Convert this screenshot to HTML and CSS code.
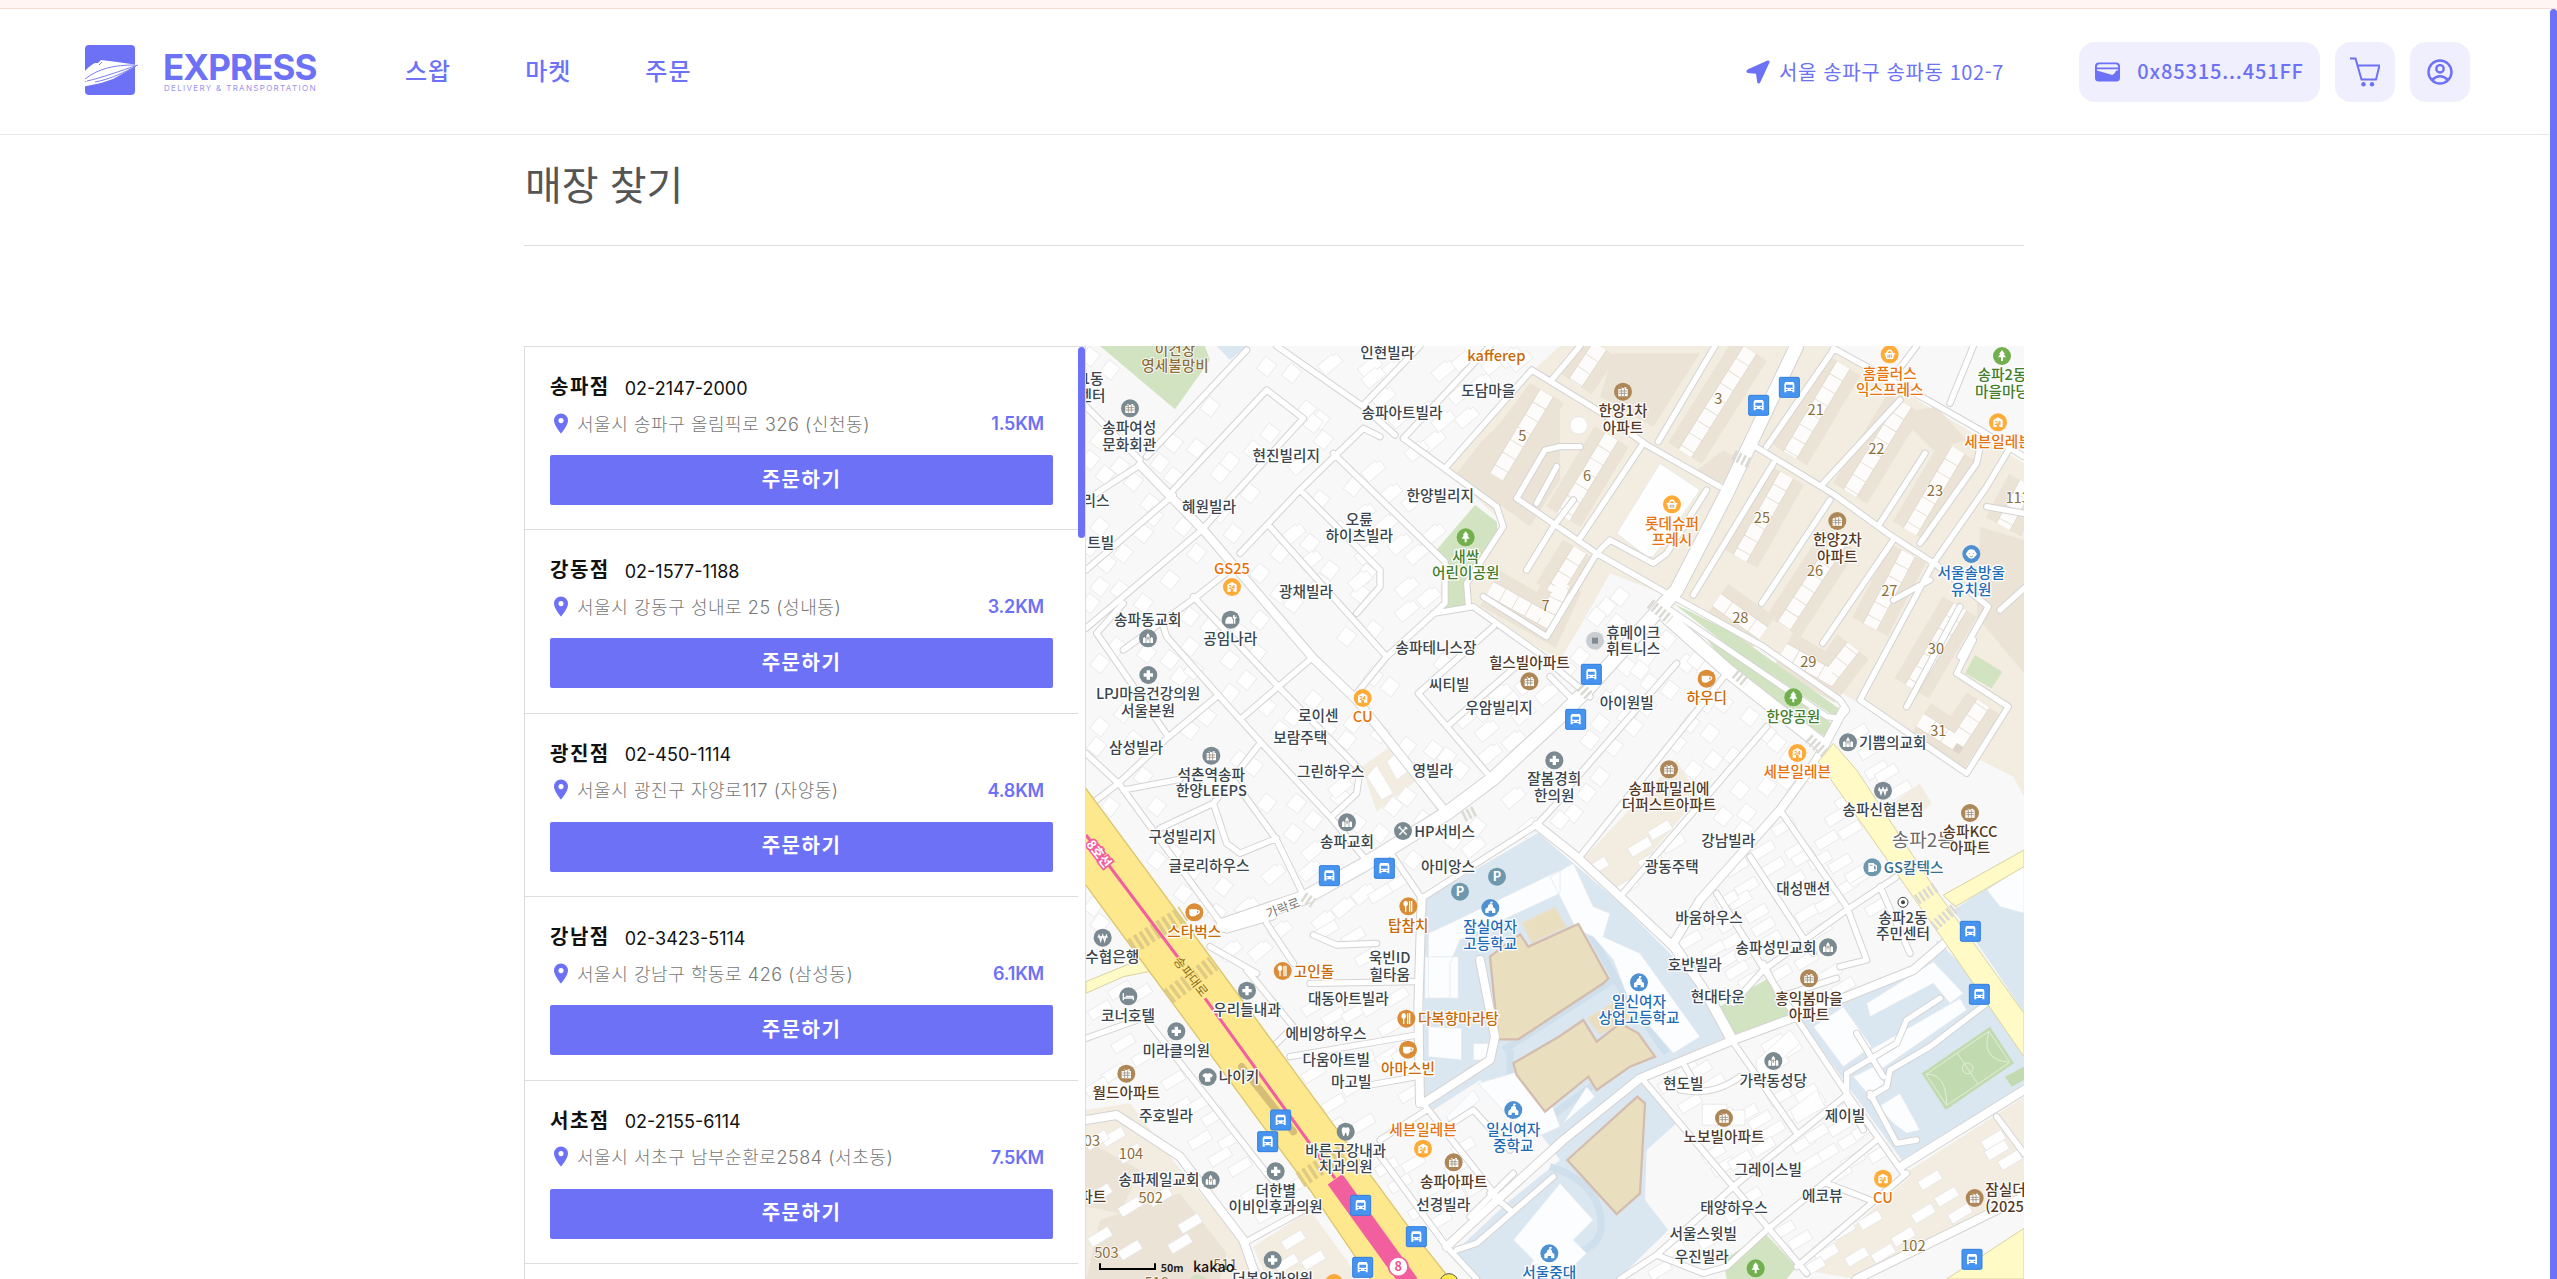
FILE: index.html
```html
<!DOCTYPE html>
<html lang="ko">
<head>
<meta charset="utf-8">
<title>매장 찾기 - EXPRESS</title>
<link rel="stylesheet" href="styles.css">
</head>
<body>
<div class="notice"></div>
<div class="viewport">
<div class="page">
<header class="header">
  <a class="logo">
    <svg class="logo-mark" viewBox="0 0 62 50"><rect x="8" width="50" height="50" rx="4"/><path class="boat" d="M4 33C4 29 13 20 18 18L21 18 24 15 40 17 61 20 36 34 24 38 0 43 10 36C6 37 4 36 4 33z"/><path class="trim" d="M10 36C24 33 43 26 61 20M8 34C22 23 38 20 58 20M25 17l-3 3M18 37C34 34 48 27 59 21"/></svg>
    <span class="logo-text"><b>EXPRESS</b><small>DELIVERY &amp; TRANSPORTATION</small></span>
  </a>
  <nav class="nav"><a>스왑</a><a>마켓</a><a>주문</a></nav>
  <div class="location"><svg viewBox="0 0 24 24"><path d="M21.500.600L2 9.200C0 10.200 0 12.700 2 13L10 13.700 11.200 22C11.600 24 13.500 24 14.300 22.300L23.500 2.500C24 1 23 0 21.500.600z"/></svg><span>서울 송파구 송파동 102-7</span></div>
  <div class="actions">
    <a class="wallet"><svg viewBox="0 0 26 20"><path fill-rule="evenodd" d="M4 0H22Q26 0 26 4V16Q26 20 22 20H4Q0 20 0 16V4Q0 0 4 0zM2 5.200H24V4Q23.500 2 21.500 2H4.500Q2.500 2 2 4zM2 7.200V8.500L18 13Q21 12 22 8.500H24V7.200z"/></svg><span>0x85315...451FF</span></a>
    <a class="square"><svg class="cart" viewBox="0 0 30 30"><path d="M0 1.500H5.500L11.500 22.500H26L29.500 8.500H7.500"/><circle cx="13.500" cy="27.300" r="2.200"/><circle cx="22" cy="27.300" r="2.200"/></svg></a>
    <a class="square"><svg class="user" viewBox="0 0 26 26"><circle cx="13" cy="13" r="11.500"/><circle cx="13" cy="9.800" r="3.700"/><path d="M5 21Q13 13.500 21 21"/></svg></a>
  </div>
</header>
<main class="content">
  <h1>매장 찾기</h1>
  <div class="finder">
    <div class="stores">
      <ul>
        <li><div class="name"><b>송파점</b><span>02-2147-2000</span></div><div class="addr"><svg viewBox="0 0 14 20"><path fill-rule="evenodd" d="M7 0a7 7 0 0 1 7 7c0 5-7 13-7 13S0 12 0 7a7 7 0 0 1 7-7zm0 4.500a2.600 2.600 0 1 0 .01 0z"/></svg><span>서울시 송파구 올림픽로 326 (신천동)</span><em>1.5KM</em></div><button>주문하기</button></li>
        <li><div class="name"><b>강동점</b><span>02-1577-1188</span></div><div class="addr"><svg viewBox="0 0 14 20"><path fill-rule="evenodd" d="M7 0a7 7 0 0 1 7 7c0 5-7 13-7 13S0 12 0 7a7 7 0 0 1 7-7zm0 4.500a2.600 2.600 0 1 0 .01 0z"/></svg><span>서울시 강동구 성내로 25 (성내동)</span><em>3.2KM</em></div><button>주문하기</button></li>
        <li><div class="name"><b>광진점</b><span>02-450-1114</span></div><div class="addr"><svg viewBox="0 0 14 20"><path fill-rule="evenodd" d="M7 0a7 7 0 0 1 7 7c0 5-7 13-7 13S0 12 0 7a7 7 0 0 1 7-7zm0 4.500a2.600 2.600 0 1 0 .01 0z"/></svg><span>서울시 광진구 자양로117 (자양동)</span><em>4.8KM</em></div><button>주문하기</button></li>
        <li><div class="name"><b>강남점</b><span>02-3423-5114</span></div><div class="addr"><svg viewBox="0 0 14 20"><path fill-rule="evenodd" d="M7 0a7 7 0 0 1 7 7c0 5-7 13-7 13S0 12 0 7a7 7 0 0 1 7-7zm0 4.500a2.600 2.600 0 1 0 .01 0z"/></svg><span>서울시 강남구 학동로 426 (삼성동)</span><em>6.1KM</em></div><button>주문하기</button></li>
        <li><div class="name"><b>서초점</b><span>02-2155-6114</span></div><div class="addr"><svg viewBox="0 0 14 20"><path fill-rule="evenodd" d="M7 0a7 7 0 0 1 7 7c0 5-7 13-7 13S0 12 0 7a7 7 0 0 1 7-7zm0 4.500a2.600 2.600 0 1 0 .01 0z"/></svg><span>서울시 서초구 남부순환로2584 (서초동)</span><em>7.5KM</em></div><button>주문하기</button></li>
      </ul>
      <div class="list-bar"></div>
    </div>
    <svg class="map" viewBox="18 18 2814 2799">
      <defs>
        <marker id="m1" markerUnits="userSpaceOnUse" markerWidth="80" markerHeight="80" refX="40" refY="40" orient="38"><path class="bld" d="M19 17H61V63H19z"/></marker>
        <marker id="m2" markerUnits="userSpaceOnUse" markerWidth="100" markerHeight="80" refX="50" refY="40" orient="-40"><path class="bld" d="M16 22H72V30H84V60H16z"/></marker>
        <marker id="m3" markerUnits="userSpaceOnUse" markerWidth="90" markerHeight="60" refX="45" refY="30" orient="-31"><path class="bld" d="M10 15H80V46H10z"/></marker>
        <g id="roads">
          <g class="lane">
            <path d="M590 18L850 200 945 285M970 295L1250 500 1270 560 1160 730 1165 790M970 295L1230 18M850 195L1020 18M1355 90L1095 385M1355 90L1560 215 1700 315 1920 440M2010 310L2260 462 2430 585 2570 675 2725 800 2640 950M2260 30L2060 320M2460 180L2230 430M2700 320L2690 370 2520 610M2810 290L2720 440 2560 670 2340 1080M2440 600L2228 910M2250 480L2045 790M2080 370L1840 765M1905 18L1735 305M1690 310L1500 595M1500 18L1415 120M1310 475L1395 330 1440 320 1500 320M1310 475L1550 640 1760 760M1550 640L1400 890M1560 630L1590 600 1720 670 1760 640 1880 450M1480 480L1420 560 1340 690M1210 770L1400 890 1470 770M1430 380L1370 490M1780 770L2050 920 2280 1080 2300 1110 2280 1135 2240 1130 1770 810M2260 25L2560 190 2700 270 2832 350M2510 18L2440 110M2680 18L2610 190M2535 340L2400 550M2440 780L2550 720M2640 800L2480 1100M2340 1080L2660 1300 2785 1100 2630 1000 2680 900M2860 720L2760 810M2832 520L2720 500"/>
            <path d="M500 30L200 350M18 200L180 360M280 450L560 150 670 235 365 570 18 865M18 690L280 465M18 480L180 375M850 265L660 450 480 640M850 265L900 290M760 340L1095 665 1095 790 920 950M660 450L900 690 900 740 830 820M570 560L920 950M1060 820L1180 800 1440 985M1240 860L1015 1060 1230 1310M450 690L350 770 130 930M130 790L50 880 265 1190M250 860L260 890 410 1060 545 1210 750 1430 850 1550M340 770L600 1045 840 1290 830 1360 755 1430M700 950L490 1130M410 1070L260 1195 115 1330 30 1395M18 1240L120 1335 430 1760M130 1350L300 1318M540 1210L400 1390 240 1465M460 1320L590 1500 670 1665M400 1390L440 1510 480 1540 590 1495M1100 1160L1330 960M920 950L830 1060M940 1550L1025 1675 1370 1455 1440 1380M560 1750L640 1870M440 1770L580 1730M390 1820L530 1900M500 1890L640 2060 580 2120M690 1930L1010 1925M630 2150L1010 2085M870 2235L1010 2210M200 2040L560 2500 620 2570M18 2095L200 2030M490 2710L690 2600M880 2420L1100 2720 1190 2817M1030 2290L1100 2380 1250 2570M900 2400L1040 2310M1100 2360L1180 2310 1290 2430M1170 2630L1300 2500M1230 2560L1290 2610M1130 2730L1190 2710 1420 2510M700 1785L770 1815 890 1810"/>
            <path d="M1940 1000L1500 1550M2060 1160L1620 1670M1790 970L1440 1370M1410 1010L1480 1080M1400 960L1530 1070M2100 1410L2300 1700 2360 1860 2280 1880M2010 1550L2200 1840M1910 1660L2060 1900 2140 2020 2300 2260 2470 2500M2450 1610L2300 1710 2050 1890 1960 1990M2400 1640L2490 1840M1685 2215L1960 2540 2180 2800M1955 2100L2150 2380M1960 2540L2300 2265M2390 2400L2060 2670 1940 2780 1870 2800 1730 2745M1960 2540L1730 2745 1620 2817M2480 2500L2150 2780M2240 2530L2370 2580M2750 2330L2832 2440M2330 2080L2410 2210M2350 2370L2300 2280 2300 2200 2450 2110 2480 2040 2580 1975M2370 2270L2420 2240 2430 2190 2550 2120 2720 1990M2370 2260L2450 2410 2510 2400M1810 2170L1850 2240M1800 2250Q1900 2270 1980 2210M2050 1870L2100 1970 2270 1915"/>
          </g>
          <g class="lane wide">
            <path d="M180 375L370 570 700 955 830 1080 1100 1420M1370 1455L1490 1550 1620 1670 1780 1820 1860 1930 1950 2095M1025 1675L1015 2000 1020 2290M1030 2290L1230 2160 1245 2090 1200 1860M2290 1110L2210 1260 2100 1410 1860 1680 1780 1810M18 2340L110 2325 300 2450 490 2700 530 2817M1100 2720L1230 2600 1450 2400 1680 2215 1960 2100 2150 2030 2500 1890 2640 1770M2470 2475L2832 2250M2330 2817L2832 2570M1780 1810L1900 1990 1960 2100"/>
          </g>
          <g class="lane avenue">
            <path d="M430 1755L680 1670 850 1575 1100 1420 1240 1315 1440 1130 1520 1050 1700 850 1790 750 1940 460 2150 18M1760 830L1940 990 2220 1210"/>
          </g>
        </g>
        <g id="slabs"><path d="M2010 30L1815 340M2290 75L2130 345M2475 190L2310 460M2635 330L2490 575M2120 405L1980 655M2280 600L2110 860M2485 640L2370 860M2640 800L2495 1045M1400 160L1250 410M1595 290L1450 530M1230 745L1400 840 1450 730M1500 630L1420 760M1560 18L1485 130M1910 780L2050 880M2110 930L2250 1010 2320 920M2520 1140L2630 1210 2710 1090M2840 430L2770 560"/></g>

        <g id="bldg"><path d="M-14-8H14V14H-14zM-10-13H-4V-8H4V-13H10V-8"/><path class="cut" d="M-12-2H12M-12 5H12M-5-8V13M4-8V13"/></g>
        <g id="plus"><path d="M-5-14H5V-5H14V5H5V14H-5V5H-14V-5H-5z"/></g>
        <g id="shop"><path d="M-14 14V-7L0-15 14-7V14H4V5H-4V14z"/></g>
        <g id="basket"><path d="M-16-4H16V0H14L10 14H-10L-14 0H-16z"/><path class="line" d="M-9-4Q0-22 9-4"/><path class="cut" d="M-5 1V10M0 1V10M5 1V10"/></g>
        <g id="tree"><path d="M0-18L9-6H5L12 4H3V15H-3V4H-12L-5-6H-9z"/></g>
        <g id="church"><path d="M-15 0L-11-4-7 0V14H-15zM-5-8L0-16 5-8V14H-5zM7 0L11-4 15 0V14H7z"/><path class="cut" d="M0-5V6M-4-1H4"/></g>
        <g id="cup"><path d="M-15-9H8V4Q6 12-4 12T-15 4z"/><path class="line" d="M8-5Q18-6 14 1 12 5 6 5"/></g>
        <g id="fork"><path d="M-15-9Q-14-17-8-17T-1-9Q-1-2-6 0V16H-10V0Q-15-2-15-9z"/><path class="line" d="M4-16V16M10-16V16"/></g>
        <g id="school"><path d="M-15 15V3L-7-3V-8L0-13V-19H7V-14H2L8-8V-3L15 3V15H5V8H-5V15z"/></g>
        <g id="won"><path class="line" d="M-12-10L-6 10 0-8 6 10 12-10M-15-2H15"/></g>
        <g id="tool"><path class="line" d="M-11-11L11 11M11-11L-11 11M-14-8L-8-14M5-12L13-5"/></g>
        <g id="dot"><path d="M-9-9H9V9H-9z"/></g>
        <g id="car"><path d="M-16 4Q-14-7-6-9H2L8 2V12H-16zM8-14H12V-8H16V-14L18-6 14-2V12H10V-2L6-6z"/></g>
        <g id="bed"><path class="line" d="M-15-10V12M-15 5H15V12M-8 0H14V5"/></g>
        <g id="shirt"><path d="M-6-12Q0-7 6-12L16-6 11 2 8 0V14H-8V0L-11 2-16-6z"/></g>
        <g id="tooth"><path d="M-12-6Q-11-14-4-13Q0-10 4-13 11-14 12-6 12 2 7 14 3 14 2 4H-2Q-3 14-7 14-12 2-12-6z"/></g>
        <g id="face"><path d="M-13-5Q-10-14 0-14T13-5L17 0 13 5Q8 14 0 14T-13 5L-17 0z"/><path class="cut" d="M-6-3V0M6-3V0M-5 6Q0 10 5 6"/></g>
        <g id="gas"><path d="M-12-13H5V14H-12z"/><path class="line" d="M5-8L12-4V8Q8 12 5 6"/><path class="cut" d="M-8-6H1"/></g>
        <g id="bus"><rect class="stop" x="-30" y="-30" width="60" height="60" rx="4"/><path fill-rule="evenodd" d="M-12-16H12L15-10V15H9V11H-9V15H-15V-10zM-10-8V1H10V-8zM-10 5V8H-5V5zM5 5V8H10V5z"/></g>
      </defs>

      <path fill="#f8f8f8" d="M18 18H2832V2817H18z"/>
      <g fill="#f3ede1">
        <path d="M1100 390L1355 95 1440 18H2240L2832 370V1370L2800 1310 2700 1260 2660 1310 2330 1085 1770 770 1590 700 1500 860 1440 960 1170 800 1160 730 1280 560z"/>
        <path d="M18 2310L150 2290 310 2500 480 2700 560 2817H18zM520 2720L690 2610 840 2817H560zM2490 2490L2740 2330 2832 2270V2560L2330 2817 2170 2790 2490 2510zM845 1280L925 1225 1005 1325 890 1415zM1505 1560L1790 1260 1855 1370 1615 1660zM2440 1390L2520 1330 2555 1390 2500 1440z"/>
      </g>
      <g fill="#ebe3d6"><path d="M1350 130L1440 180V420L1350 560 1130 400 1200 310 1260 250zM1600 40H1860L1720 260 1560 170zM1930 330L2010 380 1930 430 1840 400zM2450 220L2570 200 2660 300 2560 330zM2700 560L2832 600V1000L2690 830zM18 2400L180 2490 120 2620 18 2600zM60 2640L300 2560 440 2740 420 2817H18z"/></g>
      <use href="#slabs" class="yard"/>
      <path fill="#dbe7f0" d="M1030 1680L1375 1478 1410 1510 1620 1690 1780 1850 1840 1920 1940 2090 1680 2205 1790 2350 1700 2430 1695 2580 1765 2670 1615 2817H1180L1120 2740 1280 2590 1440 2460 1380 2380 1200 2220 1060 2310 1030 2270zM2160 2040L2260 1990 2560 1860 2570 1800 2640 1870 2832 2150V2235L2465 2460zM2620 1710L2832 1570V2020L2740 1880zM410 18H500L450 60z"/>
      <path fill="none" stroke="#cfe0ec" stroke-width="22" d="M1425 1610L1520 1760 1620 1940 1760 2140M1600 1920L1270 2130M1290 2130L1290 2200 1400 2340 1560 2220M1410 2480Q1540 2520 1560 2620T1480 2740"/>
      <g fill="#fcfdfe" stroke="#dfe6eb" stroke-width="2"><path d="M1110 1750L1440 1590V1660L1140 1800 1110 1870V1975H1045V1780zM1410 1610L1480 1570 1540 1700 1590 1720 1570 1790 1680 1840 1860 2090 1780 2140 1650 1990 1600 1860 1540 1790 1490 1770zM1035 1850H1135V1975H1035zM1045 2060L1145 2065V2160L1045 2150zM1180 2110H1225V2160H1180zM1330 2190L1410 2280 1440 2360 1350 2400 1195 2230zM1100 2330L1180 2250 1200 2280 1110 2350zM1440 2530L1540 2640 1480 2700 1520 2740 1440 2817H1330L1360 2760 1300 2700zM1430 2380L1520 2240 1545 2270 1450 2350zM2360 1990L2560 1865 2650 1960 2610 1990 2560 1930 2370 2030zM2200 2060L2290 2000 2375 2120 2290 2180zM2370 2130L2640 1975 2660 2010 2400 2190zM2320 2210L2380 2180 2415 2230 2370 2270zM2395 2300L2460 2260 2520 2370 2480 2380 2440 2350zM2720 1650L2832 1575V1720L2760 1700z"/></g>
      <g fill="#d1e3c0"><path d="M60 18H375L390 60 285 208zM1185 495L1250 545 1255 590 1160 720 1165 800 1090 812 1105 690 1065 635zM1780 790L1960 880 2283 1110 2265 1130 1960 930zM1860 870L1990 950 2255 1150 2235 1190 1950 990zM2685 945L2767 995 2735 1045 2655 1000zM1910 2005L2065 1915 2145 2035 1960 2090zM1930 2760L2055 2680 2150 2780 2120 2817H1940zM330 2817Q350 2790 380 2817z"/></g>
      <g fill="#e9dfbf" stroke="#d4bdae" stroke-width="7"><path d="M1230 1850L1320 1783 1345 1820 1495 1752 1585 1915 1570 1930 1440 2015 1315 2098H1255zM1440 2088L1300 2170 1310 2205 1395 2315 1525 2210 1550 2250 1650 2180 1725 2150 1675 2080 1620 2050 1550 2105 1510 2040zM1672 2270L1695 2290 1680 2560 1610 2622 1462 2460z"/><path stroke="#eadfc4" d="M1330 1750L1425 1705 1455 1760 1355 1805zM1525 2035L1620 1980 1650 2030 1560 2080z"/></g>
      <g fill="#c2dab0"><path d="M2525 2200L2730 2060 2802 2170 2597 2310zM2775 2210L2832 2180V2220L2795 2240z"/><g fill="none" stroke="#e2eed8" stroke-width="3"><path d="M2538 2203L2727 2074 2789 2167 2600 2296zM2632 2139L2694 2232M2538 2203Q2600 2200 2600 2296M2727 2074Q2700 2160 2789 2167"/><circle cx="2663" cy="2185" r="16"/></g></g>

      <path class="m1" d="M30 50L90 90 60 300 110 300 120 380 75 405 30 360 160 425 210 490 60 560 190 580 130 640 80 670 30 620 220 530 60 740 120 750 190 790 30 790 280 310 350 325 280 410 240 370 420 400 450 365 390 200 560 80 635 100 570 280 520 330 680 210 730 300 720 240 310 560 420 520 510 460 460 580 600 640 540 700 350 640 270 720 600 340 820 440 720 480 780 570 690 610 750 690 860 700 840 760 800 890 880 870 720 730 640 790 540 840 600 760 480 880 330 830 390 860 700 250"/>
      <path class="m2" d="M660 370L750 70 870 80 930 90 960 230 910 170 880 110 1040 210 1090 90 1150 60 1240 70 1140 160 1200 130 1060 300 1010 330 1090 240 880 390 930 460 1000 480 850 520 920 550 960 610 1060 580 1010 640 640 580 690 660 860 640 840 720 980 740 1045 770 980 810 1290 50 1160 230 1320 60"/>
      <path class="m1" d="M60 970L110 920 200 940 270 960 330 920 300 1010 340 990 240 1060 190 1090 130 1120 60 1160 50 1220 160 1200 190 1310 380 1130 330 1170 450 1060 500 1020 450 960 530 940 560 1100 640 1130 700 1080 600 1170 480 1260 520 1280 560 1390 650 1390 700 1440 640 1480 780 1370 740 1170 800 1200 820 1150 660 1200 90 1400 230 1400 280 1540 340 1590 230 1560 310 1660 280 1470 430 1640 370 1700 410 1720 60 1750 40 1700 880 1010 930 1040 900 1180 980 1220 1060 1230 1100 1250 1140 1290 940 1400 830 1450 900 1480 980 1370 1030 1440 1000 1560 1120 1500 1190 1460 1090 970"/>
      <path class="m2" d="M780 1340L1160 1130 1220 1110 1280 1080 1330 1120 1220 1170 1260 1060 1230 1240 1300 1200 1340 1030 1400 1060 1300 1370 1390 1310 1350 1460 580 1600 700 1530 500 1700 790 1700 850 1660 730 1740 600 1770 450 1830 540 1830 690 1590 1180 1520"/>
      <path class="m3" d="M950 1630L900 1660 820 1790 860 1850 740 1770 120 1950 60 2010 180 1960 100 2200 50 2240 190 2150 130 2110 250 2130 280 2220 300 2300 360 2290 400 2330 360 2400 450 2400 420 2450 480 2480 520 2560 560 2620 640 2540 700 2000 760 2030 820 2020 880 2000 950 1970 850 2160 920 2150 970 2140 700 2200 760 2290 820 2240 930 2060 990 2260 760 2360 850 2350 920 2480 960 2530 1000 2470 1050 2550 1020 2610 1080 2640 1130 2480 1190 2540 1120 2570 1150 2420 100 2390 50 2400 150 2440 60 2560 150 2600 240 2570 60 2690 150 2730 330 2650 300 2710 640 2700 620 2770 700 2760"/>
      <path class="m1" d="M1620 770L1580 800 1550 830 1610 850 1740 910 1700 950 1760 900 1820 970 1550 900 1500 950 1460 990 1640 980 1680 990 1620 1060 1580 1080 1710 1030 1700 1100 1640 1130 1560 1150 1530 1200 1600 1220 1660 1160 1770 1050 1850 960 1880 990 1880 1090 1930 1090 2010 1130 1830 1150 1790 1210 1890 1180 1900 1260 1960 1250 1840 1290 2090 1210 2060 1180 2130 1250 1980 1350 2060 1340 2120 1320 2190 1300 2000 1420 1930 1430 1990 1470 1560 1310 1520 1360 1480 1420 1470 1320 1440 1440"/>
      <path class="m3" d="M2330 1180L2370 1230 2390 1290 2460 1350 2420 1300 2300 1380 2270 1430 2310 1470 2240 1500 2220 1560 2280 1570 2110 1460 2150 1530 2170 1550 2050 1530 2080 1580 2140 1620 1970 1580 2000 1640 1980 1680 2030 1720 2050 1760 2070 1800 2110 1830 1940 1680 1900 1740 1950 1750 1960 1800 1900 1830 1940 1860 2000 1840 1830 1800 1870 1880 2180 1720 2240 1690 2220 1770 2300 1640 2340 1610 2330 1600 1970 1890 2010 1920 2100 1900 2250 1900 2290 1940 2180 1860 2190 2000 2080 2110 2130 2130 2090 2170 2180 2260 2200 2290 2140 2320 2100 2270 2080 2370 2040 2340 1820 2190 1860 2190 1900 2230 1770 2230 1830 2290 1930 2330 2000 2320 2050 2420 1900 2440 1930 2480 1980 2460 2170 2410 2210 2380 2240 2440 2280 2360 2310 2400 2350 2370 2190 2470 2290 2310 2320 2460 2400 2440 2280 2500 2010 2570 1970 2620 2110 2670 2160 2700 1780 2730 1740 2790 1890 2700 2290 2670 2370 2640 2240 2740 2200 2780 2330 2750 2740 2400 2790 2460 2750 2430 2550 2520 2600 2570 2530 2620 2470 2690 2410 2740 2640 2620 1740 1470 1680 1520 1710 1560 1780 1510 1640 1640 1550 1580 2390 1700"/>
      <path class="bld" d="M1610 580L1740 370 1860 450 1720 650 1700 650zM920 1265L952 1235 990 1290 950 1320zM860 1310L905 1380 940 1360 890 1275zM1867 2293H1940V2310H1995V2355H1867zM2030 2160L2130 2070 2160 2110 2090 2170 2070 2250 2030 2200zM2130 2310L2210 2250 2235 2300 2150 2350z"/>

      <use href="#slabs" class="slab-edge"/><use href="#slabs" class="slab"/>
      <circle class="bld" cx="1496" cy="256" r="26"/>
      <use href="#roads" class="casing"/><use href="#roads" class="street"/>

      <g fill="#fffac6" stroke="#d9d2a4" stroke-width="3"><path d="M2832 2665L2600 2817H2832zM18 1925L200 1850 230 1890 130 1910 18 1960zM2590 1665L2832 1530V1580L2625 1700zM2260 1210L2330 1290 2560 1640 2832 2020V2150L2590 1800 2215 1265z"/></g>
      <path fill="#fee88d" stroke="#dcc66e" stroke-width="4" d="M10 1335L420 1890 985 2660 1120 2830H880L690 2550 205 1890 10 1625z"/>
      <path class="zebra" d="M155 1820L310 1720M265 1970L400 1870M660 2520L800 2430"/>
      <path class="zebra gray" d="M1960 345L2010 370M1710 790L1770 840M2185 1195L2235 1240M670 1670L700 1690M1965 1000L2000 1030M1500 1040L1530 1070M2510 1680L2570 1640M2560 1760L2630 1700M1150 1430L1190 1410"/>
      <path stroke="#d6bd78" stroke-width="22" stroke-linecap="round" fill="none" d="M485 2180L640 2375"/>
      <path stroke="#f25f9f" stroke-width="9" fill="none" d="M18 1485L300 1860M375 1975L765 2515"/>
      <path stroke="#f25f9f" stroke-width="54" fill="none" d="M765 2518L990 2830"/>
      <circle cx="955" cy="2780" r="29" fill="#fff" stroke="#f25f9f" stroke-width="5"/>
      <circle cx="1107" cy="2829" r="28" fill="#fde94d" stroke="#555" stroke-width="3"/>
      <circle cx="762" cy="2829" r="27" fill="#f9a83a"/>

      <g class="gray"><g transform="translate(150 205)"><circle r="27"/><use href="#bldg"/></g><g transform="translate(452 839)"><circle r="27"/><use href="#car"/></g><g transform="translate(204 895)"><circle r="27"/><use href="#church"/></g><g transform="translate(205 1005)"><circle r="27"/><use href="#plus"/></g><g transform="translate(394 1247)"><circle r="27"/><use href="#bldg"/></g><g transform="translate(801 1447)"><circle r="27"/><use href="#church"/></g><g transform="translate(969 1473)"><circle r="27"/><use href="#tool"/></g><g transform="translate(1423 1261)"><circle r="27"/><use href="#plus"/></g><g transform="translate(68 1793)"><circle r="27"/><use href="#won"/></g><g transform="translate(2304 1207)"><circle r="27"/><use href="#church"/></g><g transform="translate(2409 1352)"><circle r="27"/><use href="#won"/></g><g transform="translate(2244 1822)"><circle r="27"/><use href="#church"/></g><g transform="translate(145 1969)"><circle r="27"/><use href="#bed"/></g><g transform="translate(501 1952)"><circle r="27"/><use href="#plus"/></g><g transform="translate(289 2074)"><circle r="27"/><use href="#plus"/></g><g transform="translate(383 2211)"><circle r="27"/><use href="#shirt"/></g><g transform="translate(797 2375)"><circle r="27"/><use href="#tooth"/></g><g transform="translate(587 2494)"><circle r="27"/><use href="#plus"/></g><g transform="translate(392 2520)"><circle r="27"/><use href="#church"/></g><g transform="translate(578 2760)"><circle r="27"/><use href="#plus"/></g><g transform="translate(2080 2163)"><circle r="27"/><use href="#church"/></g></g>
      <g class="brown"><g transform="translate(1629 155)"><circle r="27"/><use href="#bldg"/></g><g transform="translate(2272 543)"><circle r="27"/><use href="#bldg"/></g><g transform="translate(1348 1024)"><circle r="27"/><use href="#bldg"/></g><g transform="translate(1767 1288)"><circle r="27"/><use href="#bldg"/></g><g transform="translate(2670 1419)"><circle r="27"/><use href="#bldg"/></g><g transform="translate(139 2201)"><circle r="27"/><use href="#bldg"/></g><g transform="translate(1121 2467)"><circle r="27"/><use href="#bldg"/></g><g transform="translate(2187 1915)"><circle r="27"/><use href="#bldg"/></g><g transform="translate(1932 2334)"><circle r="27"/><use href="#bldg"/></g><g transform="translate(2684 2574)"><circle r="27"/><use href="#bldg"/></g></g>
      <g class="amber"><g transform="translate(456 741)"><circle r="27"/><use href="#shop"/></g><g transform="translate(2429 43)"><circle r="27"/><use href="#basket"/></g><g transform="translate(1776 493)"><circle r="27"/><use href="#basket"/></g><g transform="translate(2754 247)"><circle r="27"/><use href="#shop"/></g><g transform="translate(848 1074)"><circle r="27"/><use href="#shop"/></g><g transform="translate(2152 1239)"><circle r="27"/><use href="#shop"/></g><g transform="translate(1029 2426)"><circle r="27"/><use href="#shop"/></g><g transform="translate(2409 2516)"><circle r="27"/><use href="#shop"/></g></g>
      <g class="h24"><text x="456" y="748">24</text><text x="2754" y="254">24</text><text x="848" y="1081">24</text><text x="2152" y="1246">24</text><text x="1029" y="2433">24</text><text x="2409" y="2523">24</text></g>
      <g class="food"><g transform="translate(343 1717)"><circle r="27"/><use href="#cup"/></g><g transform="translate(1880 1016)"><circle r="27"/><use href="#cup"/></g><g transform="translate(985 1699)"><circle r="27"/><use href="#fork"/></g><g transform="translate(608 1893)"><circle r="27"/><use href="#fork"/></g><g transform="translate(979 2036)"><circle r="27"/><use href="#fork"/></g><g transform="translate(984 2129)"><circle r="27"/><use href="#cup"/></g></g>
      <g class="green"><g transform="translate(1157 592)"><circle r="27"/><use href="#tree"/></g><g transform="translate(2766 48)"><circle r="27"/><use href="#tree"/></g><g transform="translate(2140 1072)"><circle r="27"/><use href="#tree"/></g><g transform="translate(2027 2785)"><circle r="27"/><use href="#tree"/></g></g>
      <g class="blue"><g transform="translate(2674 642)"><circle r="27"/><use href="#face"/></g><g transform="translate(1231 1704)"><circle r="27"/><use href="#school"/></g><g transform="translate(1677 1927)"><circle r="27"/><use href="#school"/></g><g transform="translate(1300 2310)"><circle r="27"/><use href="#school"/></g><g transform="translate(1408 2740)"><circle r="27"/><use href="#school"/></g></g>
      <g class="teal"><g transform="translate(1251 1610)"><circle r="27"/></g><g transform="translate(1140 1655)"><circle r="27"/></g><g transform="translate(2377 1582)"><circle r="27"/><use href="#gas"/></g></g>
      <g class="park"><text x="1251" y="1624">P</text><text x="1140" y="1669">P</text></g>
      <g class="muted"><g transform="translate(1545 902)"><circle r="27"/><use href="#dot"/></g></g>
      <circle cx="2469" cy="1687" r="15" fill="#fff" stroke="#444" stroke-width="3"/><circle cx="2469" cy="1687" r="6" fill="#444"/>
      <g fill="#fff"><use href="#bus" x="2128" y="142"/><use href="#bus" x="2036" y="196"/><use href="#bus" x="1534" y="1003"/><use href="#bus" x="1487" y="1138"/><use href="#bus" x="748" y="1607"/><use href="#bus" x="913" y="1585"/><use href="#bus" x="2671" y="1774"/><use href="#bus" x="2698" y="1963"/><use href="#bus" x="2676" y="2758"/><use href="#bus" x="602" y="2340"/><use href="#bus" x="563" y="2405"/><use href="#bus" x="842" y="2596"/><use href="#bus" x="1009" y="2690"/><use href="#bus" x="848" y="2782"/></g>

      <g class="labels" transform="translate(0 16)">
        <text class="dong" x="2530" y="1505">송파2동</text>
        <text x="922" y="38">인현빌라</text><text x="1225" y="153">도담마을</text><text x="966" y="219">송파아트빌라</text><text x="148" y="264">송파여성</text><text x="148" y="313">문화회관</text><text x="38" y="117">1동</text><text x="36" y="166">센터</text><text x="619" y="348">현진빌리지</text><text x="387" y="501">혜원빌라</text><text x="48" y="482">리스</text><text x="62" y="608">트빌</text><text x="1081" y="466">한양빌리지</text><text x="838" y="538">오륜</text><text x="838" y="587">하이츠빌라</text><text x="678" y="756">광채빌라</text><text x="203" y="838">송파동교회</text><text x="451" y="897">공임나라</text><text x="1068" y="923">송파테니스장</text><text x="1660" y="877">휴메이크</text><text x="1660" y="926">휘트니스</text>
        <text x="204" y="1062">LPJ마음건강의원</text><text x="204" y="1113">서울본원</text><text x="168" y="1223">삼성빌라</text><text x="394" y="1303">석촌역송파</text><text x="394" y="1353">한양LEEPS</text><text x="715" y="1126">로이센</text><text x="661" y="1194">보람주택</text><text x="752" y="1295">그린하우스</text><text x="1058" y="1291">영빌라</text><text x="1108" y="1035">씨티빌</text><text x="1257" y="1104">우암빌리지</text><text x="307" y="1491">구성빌리지</text><text x="387" y="1576">글로리하우스</text><text x="801" y="1505">송파교회</text><text x="1094" y="1474">HP서비스</text><text x="1104" y="1580">아미앙스</text><text x="97" y="1850">수협은행</text><text x="1423" y="1317">잘봄경희</text><text x="1423" y="1367">한의원</text><text x="929" y="1854">욱빈ID</text><text x="929" y="1904">힐타움</text>
        <text x="1640" y="1088">아이원빌</text><text x="2438" y="1207">기쁨의교회</text><text x="2409" y="1409">송파신협본점</text><text x="1945" y="1503">강남빌라</text><text x="1775" y="1581">광동주택</text><text x="2170" y="1645">대성맨션</text><text x="1887" y="1733">바움하우스</text><text x="2088" y="1822">송파성민교회</text><text x="2469" y="1733">송파2동</text><text x="2469" y="1782">주민센터</text><text x="1844" y="1875">호반빌라</text>
        <text x="805" y="1976">대동아트빌라</text><text x="501" y="2008">우리들내과</text><text x="144" y="2027">코너호텔</text><text x="738" y="2081">에비앙하우스</text><text x="289" y="2131">미라클의원</text><text x="769" y="2160">다움아트빌</text><text x="814" y="2226">마고빌</text><text x="477" y="2211">나이키</text><text x="258" y="2327">주호빌라</text><text x="797" y="2432">바른구강내과</text><text x="797" y="2481">치과의원</text><text x="237" y="2520">송파제일교회</text><text x="587" y="2551">더한별</text><text x="587" y="2600">이비인후과의원</text><text x="1090" y="2595">선경빌라</text><text x="578" y="2817">더봄안과의원</text>
        <text x="1913" y="1971">현대타운</text><text x="2080" y="2221">가락동성당</text><text x="1810" y="2231">현도빌</text><text x="2295" y="2328">제이빌</text><text x="2065" y="2490">그레이스빌</text><text x="2227" y="2568">에코뷰</text><text x="1962" y="2604">태양하우스</text><text x="1870" y="2682">서울스윗빌</text><text x="1865" y="2750">우진빌라</text>
        <g class="t-apt"><text x="1629" y="213">한양1차</text><text x="1629" y="262">아파트</text><text x="2272" y="600">한양2차</text><text x="2272" y="650">아파트</text><text x="1348" y="968">힐스빌아파트</text><text x="1767" y="1346">송파파밀리에</text><text x="1767" y="1395">더퍼스트아파트</text><text x="2670" y="1475">송파KCC</text><text x="2670" y="1524">아파트</text><text x="139" y="2257">월드아파트</text><text x="1121" y="2524">송파아파트</text><text x="2187" y="1975">홍익봄마을</text><text x="2187" y="2023">아파트</text><text x="1932" y="2390">노보빌아파트</text><text x="38" y="2569">파트</text><text class="start" x="2716" y="2550">잠실더</text><text class="start" x="2716" y="2601">(2025</text></g>
        <g class="t-num"><text x="1327" y="287">5</text><text x="1397" y="797">7</text><text x="1915" y="176">3</text><text x="1521" y="407">6</text><text x="2207" y="209">21</text><text x="2389" y="325">22</text><text x="2565" y="453">23</text><text x="2813" y="474">113</text><text x="2046" y="532">25</text><text x="2205" y="692">26</text><text x="2428" y="753">27</text><text x="1981" y="832">28</text><text x="2185" y="965">29</text><text x="2568" y="927">30</text><text x="2575" y="1171">31</text><text x="2500" y="2718">102</text><text x="36" y="2402">03</text><text x="153" y="2440">104</text><text x="212" y="2574">502</text><text x="79" y="2737">503</text><text x="436" y="2775">511</text><text x="230" y="2828">510</text><text class="heavy" x="285" y="30">이건창</text><text class="heavy" x="285" y="78">영세불망비</text></g>
        <g class="t-shop"><text x="456" y="685">GS25</text><text x="1776" y="551">롯데슈퍼</text><text x="1776" y="600">프레시</text><text x="2429" y="101">홈플러스</text><text x="2429" y="150">익스프레스</text><text x="2754" y="306">세븐일레븐</text><text x="848" y="1131">CU</text><text x="2152" y="1296">세븐일레븐</text><text x="1029" y="2370">세븐일레븐</text><text x="2409" y="2573">CU</text></g>
        <g class="t-food"><text x="1249" y="47">kafferep</text><text x="343" y="1774">스타벅스</text><text x="1880" y="1073">하우디</text><text x="985" y="1756">탑참치</text><text x="702" y="1894">고인돌</text><text x="1135" y="2036">다복향마라탕</text><text x="984" y="2187">아마스빈</text></g>
        <g class="t-green"><text x="1157" y="650">새싹</text><text x="1157" y="699">어린이공원</text><text x="2766" y="105">송파2동</text><text x="2766" y="155">마을마당</text><text x="2140" y="1130">한양공원</text></g>
        <g class="t-blue"><text x="2674" y="699">서울솔방울</text><text x="2674" y="748">유치원</text><text x="1231" y="1761">잠실여자</text><text x="1231" y="1811">고등학교</text><text x="1677" y="1985">일신여자</text><text x="1677" y="2034">상업고등학교</text><text x="1300" y="2368">일신여자</text><text x="1300" y="2417">중학교</text><text x="1408" y="2798">서울중대</text></g>
        <g class="t-teal"><text x="2501" y="1582">GS칼텍스</text></g>
      </g>
      <text class="road-name" transform="translate(614 1717) rotate(-21)">가락로</text>
      <text class="road-name main" transform="translate(322 1918) rotate(52)">송파대로</text>
      <text class="line-name" transform="translate(46 1550) rotate(52)">8호선</text>
      <text class="line-num" x="955" y="2794">8</text>
      <path fill="none" stroke="#000" stroke-width="6" d="M60 2770V2787H225V2770"/>
      <text class="scale" x="242" y="2796">50m</text>
      <text class="kakao" x="339" y="2795">kakao</text>
    </svg>
  </div>
</main>
</div>
<div class="page-bar"></div>
</div>
</body>
</html>
```

FILE: styles.css
```css
* { box-sizing: border-box; }
body { margin: 0; height: 1279px; overflow: hidden; background: #fff; font-family: "Noto Sans CJK KR", sans-serif; color: #111; }
.notice { height: 9px; background: #fff6f3; border-bottom: 1px solid #f5dcd2; }
.viewport { display: flex; height: 1270px; overflow: hidden; }
.page { width: 2550px; flex: none; }
.page-bar { width: 7px; height: 1400px; background: #6d71f6; border-radius: 4px 4px 0 0; }

.header { display: flex; align-items: center; height: 126px; padding: 0 80px 0 77px; border-bottom: 1px solid #e8e8e8; color: #6d71f6; }
.logo { display: flex; width: 328px; margin-top: -4px; }
.logo-mark { width: 62px; height: 50px; fill: #6d71f6; margin-right: 24px; flex: none; }
.logo-mark .boat { fill: #fff; }
.logo-mark .trim { fill: none; stroke: #6d71f6; stroke-width: .9; }
.logo-text { display: flex; flex-direction: column; font-family: Inter, sans-serif; }
.logo-text b { font-size: 35px; line-height: 43px; font-weight: 700; letter-spacing: -.9px; margin-top: 1px; }
.logo-text small { font-size: 8px; line-height: 8px; letter-spacing: 1.320px; color: #9a92ec; margin: -5px 0 0 1px; white-space: nowrap; }
.nav { display: flex; gap: 74px; font-size: 24px; font-weight: 500; letter-spacing: 1px; line-height: 36px; margin-top: -3px; }
.location { display: flex; align-items: center; margin-left: auto; gap: 9px; font-size: 20px; letter-spacing: .6px; line-height: 30px; }
.location svg { width: 24px; height: 24px; fill: #6d71f6; }
.actions { display: flex; gap: 15px; margin-left: 75px; }
.actions a { height: 60px; border-radius: 16px; background: #f0effe; display: flex; align-items: center; justify-content: center; }
.actions .wallet { width: 241px; gap: 17px; font-size: 20px; font-weight: 500; letter-spacing: .85px; }
.wallet svg { width: 25px; height: 20px; fill: #6d71f6; }
.wallet span { line-height: 30px; margin-top: -2px; }
.square { width: 60px; }
.cart { width: 30px; height: 30px; fill: #6d71f6; }
.cart path { fill: none; stroke: #6d71f6; stroke-width: 2; }
.user { width: 26px; height: 26px; fill: none; stroke: #6d71f6; stroke-width: 2.400; }

.content { width: 1500px; margin: 0 0 0 524px; }
h1 { margin: 0; height: 111px; padding: 18px 0 0 1px; font-size: 40px; line-height: 60px; font-weight: 400; color: #555; border-bottom: 1px solid #ddd; }
.finder { display: flex; margin-top: 100px; height: 933px; }
.stores { display: flex; width: 562px; flex: none; border: 1px solid #ddd; border-bottom: 0; overflow: hidden; }
.stores ul { flex: 1; margin: 0; padding: 0; list-style: none; }
.stores li { height: 183.400px; padding: 24.500px 25px 0; border-bottom: 1px solid #ddd; }
.list-bar { width: 7px; height: 191px; border-radius: 4px; background: #6d71f6; }
.name { display: flex; align-items: center; height: 30px; gap: 15px; }
.name b { font-size: 20px; font-weight: 700; letter-spacing: 1.500px; margin-top: -2px; }
.name span { font: 18px/22px Inter, sans-serif; margin-top: 4px; }
.addr { display: flex; align-items: center; height: 30px; margin-top: 7.500px; padding: 0 9px 0 4px; font: 300 18px/27px Inter, "Noto Sans CJK KR", sans-serif; letter-spacing: .55px; color: #777; }
.addr svg { width: 14px; height: 21px; fill: #6d71f6; margin: -2px 9px 0 0; }
.addr em { margin-left: auto; font: 600 18px/22px Inter, sans-serif; color: #6d71f6; letter-spacing: -.2px; }
.stores button { display: block; width: 503px; height: 50px; margin-top: 16px; padding: 0 0 3px; border: 0; border-radius: 2px; background: #6d71f6; color: #fff; font: 700 20px/30px "Noto Sans CJK KR", sans-serif; letter-spacing: 1.500px; }

.map { width: 938px; height: 933px; flex: none; display: block; overflow: hidden; }
.bld { fill: #fefefe; stroke: #e2e2e2; stroke-width: 2; }
.m1, .m2, .m3 { fill: none; }
.m1 { marker: url(#m1); }
.m2 { marker: url(#m2); }
.m3 { marker: url(#m3); }
.street { --edge: 0px; fill: none; stroke: #fff; stroke-linejoin: round; stroke-linecap: round; }
.casing { --edge: 6px; fill: none; stroke: #d3d3d3; stroke-linejoin: round; stroke-linecap: round; }
.lane { stroke-width: calc(16px + var(--edge)); }
.lane.wide { stroke-width: calc(24px + var(--edge)); }
.lane.avenue { stroke-width: calc(40px + var(--edge)); }
.yard { fill: none; stroke: #ebe3d6; stroke-width: 120; }
.slab-edge { fill: none; stroke: #ddd5c9; stroke-width: 48; }
.slab { fill: none; stroke: #fdfcfb; stroke-width: 44; stroke-dasharray: 42 2; }
.zebra { fill: none; stroke: #dfcb85; stroke-width: 50; stroke-dasharray: 11 9; }
.zebra.gray { stroke: #dcdad4; stroke-width: 32; stroke-dasharray: 8 7; }
.line { fill: none; stroke: #fff; stroke-width: 4; }
.cut { fill: none; stroke: #9a9080; stroke-width: 2.500; }
.stop { fill: #4793f0; stroke: #327fdc; stroke-width: 3; }
.gray circle { fill: #7b8990; }
.brown circle { fill: #ad8757; }
.amber circle { fill: #ffab38; }
.food circle { fill: #da8c36; }
.green circle { fill: #72b04f; }
.blue circle { fill: #4e90d0; }
.teal circle { fill: #6d98ad; }
.muted circle { fill: #cacdd1; }
.muted use { fill: #808b93; }
.gray use, .brown use, .amber use, .food use, .green use, .blue use, .teal use { fill: #fff; }
.h24 text { font: 700 15px Inter, sans-serif; text-anchor: middle; fill: #f09a20; }
.park text { font: 700 38px "Noto Sans CJK KR", sans-serif; text-anchor: middle; fill: #fff; }
.labels text { font-size: 44px; font-weight: 500; text-anchor: middle; fill: #3a454d; stroke: #fff; stroke-width: 8px; stroke-linejoin: round; paint-order: stroke; }
.labels .start { text-anchor: start; }
.labels .dong { font-size: 57px; font-weight: 400; fill: #6a6a6a; }
.labels .t-apt text { fill: #553a28; }
.labels .t-num text { fill: #8b6e3c; font-weight: 400; stroke-width: 5px; }
.labels .t-num .heavy { font-weight: 500; }
.labels .t-shop text { fill: #e8730c; }
.labels .t-food text { fill: #c96a08; }
.labels .t-green text { fill: #437e2b; }
.labels .t-blue text { fill: #1e6cb8; }
.labels .t-teal text { fill: #356f8d; }
.road-name, .line-name { font-size: 38px; text-anchor: middle; fill: #777; stroke: #fff; stroke-width: 6px; paint-order: stroke; }
.road-name.main { fill: #8a6d20; stroke: #fee88d; }
.line-name { fill: #fff; stroke: #f25f9f; stroke-width: 10px; font-weight: 700; }
.line-num { font: 700 38px "Noto Sans CJK KR", sans-serif; text-anchor: middle; fill: #f0508f; }
.scale { font: 700 32px "Noto Sans CJK KR", sans-serif; fill: #222; }
.kakao { font: 500 43px "Noto Sans CJK KR", sans-serif; fill: #111; }
```
